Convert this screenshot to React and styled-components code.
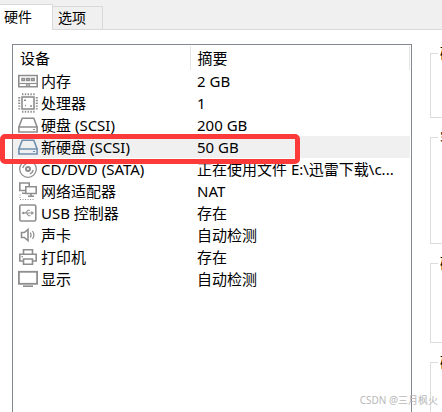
import React, { useState } from 'react'
import styled, { createGlobalStyle } from 'styled-components'


const GlobalStyle = createGlobalStyle`
    * {
        box-sizing: border-box;
    }

    body {
        margin: 0;
        background: #fff;
        color: #000;
        font-family: 'Noto Sans', 'Noto Sans CJK SC', sans-serif;
        font-size: 15px;
        line-height: 20px;
    }
`

const Page = styled.div`
    display: flex;
    flex-direction: column;
    height: 100vh;
    overflow: hidden;
`

const TabBar = styled.div`
    display: flex;
    align-items: flex-end;
    height: 30px;
    background: #f0f0f0;
    box-shadow: inset 0 -1px #d9d9d9;
`

const Tab = styled.button`
    height: ${({ $active }) => ($active ? '26px' : '24px')};
    padding: ${({ $active }) => ($active ? '0 20px 2px 4px' : '0 16px 0 5px')};
    border: solid #d9d9d9;
    border-width: ${({ $active }) => ($active ? '1px 1px 0 0' : '1px 1px 1px 0')};
    background: ${({ $active }) => ($active ? '#fff' : '#f0f0f0')};
    color: inherit;
    font: inherit;
    font-size: 14px;
`

const Content = styled.div`
    display: flex;
    flex: 1;
    gap: 18px;
    min-height: 0;
    padding-left: 12px;
`

const DeviceList = styled.div`
    flex: 1;
    min-width: 0;
    margin-top: 14px;
    border: 1px solid #828790;
    border-bottom: 0;
    padding: 1px 1px 0 0;
`

const Table = styled.table`
    width: 100%;
    table-layout: fixed;
    border-collapse: collapse;

    & th {
        height: 24px;
        padding: 0 0 0 7px;
        border-right: 1px solid #e5e5e5;
        font-weight: normal;
        text-align: left;
    }
    & th:first-child {
        width: 177px;
    }
    & td {
        height: 22px;
        padding: 0 0 0 7px;
        overflow: hidden;
        white-space: nowrap;
    }
    & td:first-child {
        padding-left: 5px;
    }
`

const Row = styled.tr`
    background: ${({ $selected }) => ($selected ? '#f0f0f0' : '#fff')};
`

const Device = styled.span`
    display: flex;
    align-items: center;
    gap: 3px;
`

const Icon = styled.svg`
    flex: none;
    width: 20px;
    height: 20px;
    color: ${({ $selected }) => ($selected ? '#6f8fae' : '#8e8e8e')};
    fill: none;
    stroke: currentColor;
    stroke-width: 1.6;
`

const Marker = styled.div`
    position: absolute;
    top: 134px;
    left: 0;
    width: 300px;
    height: 30px;
    border: 5px solid #fc3a3a;
    border-radius: 5px;
    pointer-events: none;
`

const Side = styled.div`
    display: flex;
    flex: 0 0 12px;
    flex-direction: column;
    gap: 9px;
    padding-top: 13px;
    overflow: hidden;
`

const Group = styled.fieldset`
    flex: none;
    width: 240px;
    height: ${({ $height }) => $height}px;
    margin: 0;
    padding: 0 7px;
    border: 1px solid #dcdcdc;

    & legend {
        padding: 0 2px;
    }
`

const Watermark = styled.div`
    position: absolute;
    right: 4px;
    bottom: 2px;
    color: #b8b8b8;
    font-size: 10px;
`

const icons = {
    memory: (
        <>
            <path d="M.8 4.5h18.4v11.2H.8z" />
            <path d="M4 7.5h2.5v2H4zM8.8 7.5h2.5v2H8.8zM13.6 7.5h2.5v2h-2.5z" />
            <path d="M1.5 12.5h17" strokeWidth="1.2" />
            <path d="M8.5 15.7v-1.8h3v1.8" strokeWidth="1.2" />
        </>
    ),
    cpu: (
        <>
            <rect x="4" y="4" width="12" height="12" />
            <path d="M4 1.2h13M4 18.8h13M1.2 4v13M18.8 4v13" strokeWidth="2" strokeDasharray="1.4 1.4" />
            <path d="M6 7.3h2M12 13h2M7 12.5h1" />
        </>
    ),
    disk: (
        <>
            <path d="M.9 12L4.2 3.3h11.6l3.3 8.7" />
            <path d="M.9 12h18.2v5H.9z" />
            <path d="M15 14.5h2" strokeWidth="1.2" />
        </>
    ),
    cd: (
        <>
            <circle cx="10" cy="10" r="8.3" strokeWidth="1.3" />
            <circle cx="10" cy="10" r="2" strokeWidth="2" />
            <path d="M4.8 9a5.3 5.3 0 0 1 3.5-4M15.2 11a5.3 5.3 0 0 1-3.5 4" strokeWidth="1.3" />
        </>
    ),
    network: (
        <>
            <path d="M7 9.5H1.8V2h9.4v3M4 12.3h3.5" />
            <path d="M7.8 5.8h10.4v6.7H7.8zM13 12.5v2.8M10 15.3h6" />
            <path d="M2 13.5v5h14" strokeWidth="1" strokeDasharray="1 1.5" />
        </>
    ),
    usb: (
        <>
            <rect x="1.8" y="2" width="16" height="16" rx="1.5" />
            <path d="M5 10h9M7.5 10L10 7.2h2M8.5 10l2 2.8h2" strokeWidth="1.1" />
            <path d="M13.5 8.3l2.3 1.7-2.3 1.7z" fill="currentColor" strokeWidth=".3" />
            <circle cx="5.2" cy="10" r="1.1" fill="currentColor" strokeWidth=".3" />
        </>
    ),
    sound: (
        <>
            <path d="M3.5 7.5h2.8L10 4.5v11l-3.7-3h-2.8z" />
            <path d="M12.2 7.5q1.8 2.5 0 5M14.5 6q2.8 4 0 8" strokeWidth="1.2" />
        </>
    ),
    printer: (
        <>
            <path d="M5.5 7V2.8h9V7" />
            <path d="M5.5 14H1.8V7.2h16.4V14h-3.7" />
            <path d="M5.5 12h9v5.3h-9z" />
            <path d="M3.5 9.7H5" strokeWidth="1.2" />
        </>
    ),
    display: (
        <>
            <rect x=".9" y="2.8" width="18.2" height="12" strokeWidth="1.8" />
            <path d="M5 17.2h10" />
        </>
    ),
}

const devices = [
    { icon: 'memory', name: '内存', summary: '2 GB' },
    { icon: 'cpu', name: '处理器', summary: '1' },
    { icon: 'disk', name: '硬盘 (SCSI)', summary: '200 GB' },
    { icon: 'disk', name: '新硬盘 (SCSI)', summary: '50 GB' },
    { icon: 'cd', name: 'CD/DVD (SATA)', summary: '正在使用文件 E:\\迅雷下载\\c...' },
    { icon: 'network', name: '网络适配器', summary: 'NAT' },
    { icon: 'usb', name: 'USB 控制器', summary: '存在' },
    { icon: 'sound', name: '声卡', summary: '自动检测' },
    { icon: 'printer', name: '打印机', summary: '存在' },
    { icon: 'display', name: '显示', summary: '自动检测' },
]

const groups = [
    { title: '磁盘文件', height: 75 },
    { title: '容量', height: 117 },
    { title: '磁盘信息', height: 90 },
    { title: '磁盘实用工具', height: 120 },
]

const App = () => {
    const [selected, setSelected] = useState(3)

    return (
        <Page>
            <GlobalStyle />
            <TabBar role="tablist">
                <Tab role="tab" aria-selected="true" $active>硬件</Tab>
                <Tab role="tab" aria-selected="false">选项</Tab>
            </TabBar>
            <Content>
                <DeviceList>
                    <Table>
                        <thead>
                            <tr>
                                <th>设备</th>
                                <th>摘要</th>
                            </tr>
                        </thead>
                        <tbody>
                            {devices.map(({ icon, name, summary }, i) => (
                                <Row key={name} $selected={i === selected} onClick={() => setSelected(i)}>
                                    <td>
                                        <Device>
                                            <Icon viewBox="0 0 20 20" $selected={i === selected}>{icons[icon]}</Icon>
                                            {name}
                                        </Device>
                                    </td>
                                    <td>{summary}</td>
                                </Row>
                            ))}
                        </tbody>
                    </Table>
                </DeviceList>
                <Side>
                    {groups.map(({ title, height }) => (
                        <Group key={title} $height={height}>
                            <legend>{title}</legend>
                        </Group>
                    ))}
                </Side>
            </Content>
            <Marker />
            <Watermark>CSDN @三月枫火</Watermark>
        </Page>
    )
}

export default App
